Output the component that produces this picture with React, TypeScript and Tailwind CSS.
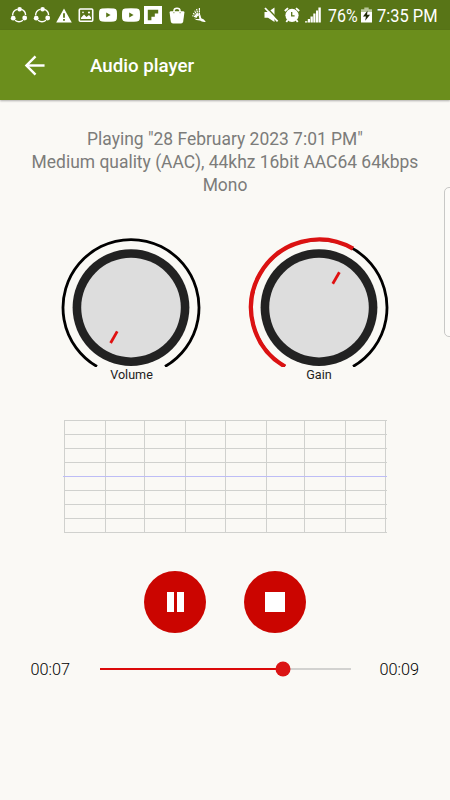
import { ArrowLeft } from 'lucide-react';

const RING_RADIUS = 68;

// Angles are clockwise from 12 o'clock, the knob is centred on 0,0
function point(angle: number, radius: number) {
  const rad = (angle * Math.PI) / 180;
  return { x: Math.sin(rad) * radius, y: -Math.cos(rad) * radius };
}

function arc(from: number, to: number) {
  const a = point(from, RING_RADIUS);
  const b = point(to, RING_RADIUS);
  const large = to - from > 180 ? 1 : 0;
  return `M${a.x} ${a.y}A${RING_RADIUS} ${RING_RADIUS} 0 ${large} 1 ${b.x} ${b.y}`;
}

function Knob({ label, angle }: { label: string; angle: number }) {
  const inner = point(angle, 27.5);
  const outer = point(angle, 40.8);

  return (
    <div className="flex w-[142px] flex-col items-center">
      <svg className="h-[130px] w-[142px]" viewBox="-71 -70.6 142 130" fill="none">
        <path d={arc(-150, 150)} stroke="#000" strokeWidth="2.8" />
        {angle > -150 && <path d={arc(-150, angle)} stroke="#db1212" strokeWidth="4.3" />}
        <circle r="58.4" fill="#222" />
        <circle r="49.8" fill="#ddd" />
        <line x1={inner.x} y1={inner.y} x2={outer.x} y2={outer.y} stroke="#e01010" strokeWidth="2.8" />
      </svg>
      <span className="pl-[1px] text-[12.6px] leading-[15px] text-[#222]">{label}</span>
    </div>
  );
}

function ShareIcon() {
  return (
    <svg className="h-[18px] w-[18px]" viewBox="0 0 18 18" fill="none">
      <path d="M2.6 9.5A6.4 6.4 0 0 1 7 3.4M11.5 3.4A6.4 6.4 0 0 1 15.6 9M13 14.2A6.4 6.4 0 0 1 5 14.2" stroke="#fff" strokeWidth="1.4" />
      <circle cx="9.6" cy="3.2" r="2.3" fill="#fff" />
      <circle cx="3.2" cy="12.2" r="2.4" fill="#fff" />
      <circle cx="14.7" cy="12" r="2.4" fill="#fff" />
    </svg>
  );
}

function YoutubeIcon() {
  return (
    <svg className="h-[14px] w-[18px]" viewBox="0 0 18 14">
      <path fill="#fff" fillRule="evenodd" d="M3 .5Q9-.2 15 .5Q17.6.8 17.8 3Q18.2 7 17.8 11Q17.5 13.2 15 13.5Q9 14.2 3 13.5Q.5 13.2.2 11Q-.2 7 .2 3Q.4.8 3 .5ZM7.2 4.4V9.6L11.6 7Z" />
    </svg>
  );
}

function StatusBar() {
  return (
    <div className="flex h-[30px] shrink-0 items-center bg-[#587517] pl-[10px] pr-[13px] text-white">
      <div className="flex items-center gap-[4.8px]">
        <ShareIcon />
        <ShareIcon />
        <svg className="h-[15px] w-[16px]" viewBox="0 0 16 15">
          <path fill="#fff" fillRule="evenodd" d="M8 .4L15.8 14.4H.2ZM7.1 5.2V9.8H8.9V5.2ZM7.1 11V12.8H8.9V11Z" />
        </svg>
        <svg className="ml-[1.7px] h-[16px] w-[16px]" viewBox="0 0 16 16" fill="none">
          <rect x="1.3" y="2" width="13.4" height="12.2" rx="1" stroke="#fff" strokeWidth="1.6" />
          <path d="M3 12V10.8L6 7.6L8.5 10L11 8L13 10.5V12Z" fill="#fff" />
          <circle cx="11" cy="5.5" r="1.1" fill="#fff" />
          <circle cx="5" cy="5.4" r=".8" fill="#fff" />
        </svg>
        <YoutubeIcon />
        <YoutubeIcon />
        <svg className="h-[18px] w-[18px]" viewBox="0 0 18 18">
          <path fill="#fff" d="M0 0H18V18H0Z" />
          <path fill="#587517" d="M3.8 3.8H14.2V7.4H10.8V10.8H7.4V14.2H3.8Z" />
        </svg>
        <svg className="ml-[1.5px] h-[17px] w-[16px]" viewBox="0 0 16 17" fill="none">
          <path d="M5 5V3.7Q5 1.2 8 1.2T11 3.7V5" stroke="#fff" strokeWidth="1.5" />
          <path d="M.6 5.4Q.6 4.2 2 4.2H14Q15.4 4.2 15.4 5.4L14.2 14.5Q13.9 16.6 12 16.6H4Q2.1 16.6 1.8 14.5Z" fill="#fff" />
          <path d="M4.9 5.3V6.2M11.1 5.3V6.2" stroke="#587517" strokeWidth="1" />
        </svg>
        <svg className="ml-[2px] h-[16px] w-[14px]" viewBox="0 0 14 16" fill="none">
          <path d="M7.4 8.6V1M6.3 8.8L4.6 2M5.6 9.2L2.6 3.8M5 9.8L1 6M4.8 10.4L.4 8.6" stroke="#fff" strokeWidth="1.2" strokeDasharray="3.2 .5 1.6 .4" />
          <path d="M1.8 11.2Q5.2 12.4 7.4 11.9L6.8 9L8.2 7.6L9.3 11.2Q12.2 12 13.8 14.9Q10 15.4 8 13.6Q4.4 13.8 1.8 11.2Z" fill="#fff" />
        </svg>
      </div>
      <div className="ml-auto flex items-center">
        <svg className="h-[16px] w-[15px]" viewBox="0 0 15 16" fill="none">
          <path d="M.5 5H4L10.5.5V15L4 10.8H.5Z" fill="#fff" />
          <path d="M2.4.2L14.6 13" stroke="#587517" strokeWidth="1.5" />
          <path d="M1 1L13.6 14.4" stroke="#fff" strokeWidth="1.8" />
        </svg>
        <svg className="ml-[4.5px] h-[16px] w-[16px]" viewBox="0 0 16 16" fill="none">
          <circle cx="8" cy="8.3" r="6.6" fill="#fff" />
          <path d="M.8 4L4 1.1M15.2 4L12 1.1M3.7 13L2.3 15M12.3 13L13.7 15" stroke="#fff" strokeWidth="1.8" />
          <path d="M7.7 5V8.9H10.6" stroke="#587517" strokeWidth="1.3" />
        </svg>
        <svg className="ml-[5.5px] h-[16px] w-[16px]" viewBox="0 0 16 16">
          <path fill="#fff" d="M0 14.2H2.3V15.5H0ZM2.8 12H5V15.5H2.8ZM5.5 9.5H7.8V15.5H5.5ZM8.3 6.5H10.5V15.5H8.3ZM11 3.5H13V15.5H11ZM13.4.5H15.8V15.5H13.4Z" />
        </svg>
        <span className="ml-[7px] w-[30px] origin-left scale-x-[0.84] whitespace-nowrap pt-[2px] text-[19px] leading-[28px]">76%</span>
        <svg className="ml-[3px] h-[16px] w-[11px]" viewBox="0 0 10 16" preserveAspectRatio="none">
          <path fill="#b8c79a" d="M3 .5H7V2.3H10V5H0V2.3H3Z" />
          <path fill="#fff" d="M0 5H10V15.5H0Z" />
          <path fill="#202a08" d="M6 3.5L1.8 9.4H4.5L3.8 13.8L8.2 7.8H5.5Z" />
        </svg>
        <span className="ml-[5px] w-[60px] origin-left scale-x-[0.865] whitespace-nowrap pt-[2px] text-[19px] leading-[28px]">7:35 PM</span>
      </div>
    </div>
  );
}

function Waveform() {
  const columns = [1, 42, 81, 122, 162, 203, 241, 282, 322];
  const rows = [0, 14, 28, 42, 70, 84, 98, 112];

  return (
    <svg className="ml-[63px] mt-[37.5px] h-[113px] w-[325px] shrink-0" viewBox="0 0 325 113" shapeRendering="crispEdges">
      {rows.map((y) => (
        <rect key={y} x="1" y={y} width="323" height="1" fill="#d0d1ce" />
      ))}
      {columns.map((x) => (
        <rect key={x} x={x} y="0" width="1" height="113" fill="#d0d1ce" />
      ))}
      <rect x="0" y="56" width="324" height="1" fill="#bdbdf6" />
    </svg>
  );
}

export default function App() {
  const progress = 73;

  return (
    <div className="relative flex h-[800px] w-[450px] flex-col overflow-hidden bg-[#faf9f5] font-[Roboto,sans-serif]">
      <StatusBar />

      <header className="flex h-[70px] shrink-0 items-center bg-[#6b8e1c] text-white shadow-[0_1px_2px_rgba(0,0,0,0.3)]">
        <button className="ml-[20px]" aria-label="Back">
          <ArrowLeft className="h-[31px] w-[31px]" strokeWidth={1.9} strokeLinecap="butt" strokeLinejoin="miter" />
        </button>
        <h1 className="ml-[39px] pt-[2px] text-[18.7px] font-medium">Audio player</h1>
      </header>

      <p className="mt-[28px] text-center text-[17.45px] leading-[23px] text-[#7c7c7a]">
        Playing "28 February 2023 7:01 PM"
        <br />
        Medium quality (AAC), 44khz 16bit AAC64 64kbps
        <br />
        Mono
      </p>

      <div className="mt-[40px] flex gap-[45.5px] pl-[60px]">
        <Knob label="Volume" angle={-150} />
        <Knob label="Gain" angle={30} />
      </div>

      <Waveform />

      <div className="mt-[38px] flex gap-[38px] pl-[144px]">
        <button className="flex h-[62px] w-[62px] items-center justify-center gap-[3px] rounded-full bg-[#cb0500]" aria-label="Pause">
          <span className="h-[20px] w-[7px] bg-white" />
          <span className="h-[20px] w-[7px] bg-white" />
        </button>
        <button className="flex h-[62px] w-[62px] items-center justify-center rounded-full bg-[#cb0500]" aria-label="Stop">
          <span className="h-[20px] w-[20px] bg-white" />
        </button>
      </div>

      <div className="mt-[23px] flex h-[26px] items-center pl-[30.5px] text-[16.3px] font-light text-black">
        <span className="w-[69px] pt-[4px]">00:07</span>
        <div className="relative h-[2px] w-[251px] bg-[#d2d2d0]">
          <div className="h-full bg-[#db0a0a]" style={{ width: `${progress}%` }} />
          <div
            className="absolute top-1/2 h-[15px] w-[15px] -translate-x-1/2 -translate-y-1/2 rounded-full bg-[#db1414]"
            style={{ left: `${progress}%` }}
          />
        </div>
        <span className="ml-[29px] pt-[4px]">00:09</span>
      </div>

      {/* Edge panel handle */}
      <div className="absolute right-[-6px] top-[187px] h-[150px] w-[12px] rounded-l-[5px] border border-[#c8c8c6] bg-[#fcfbf8]" />
    </div>
  );
}
